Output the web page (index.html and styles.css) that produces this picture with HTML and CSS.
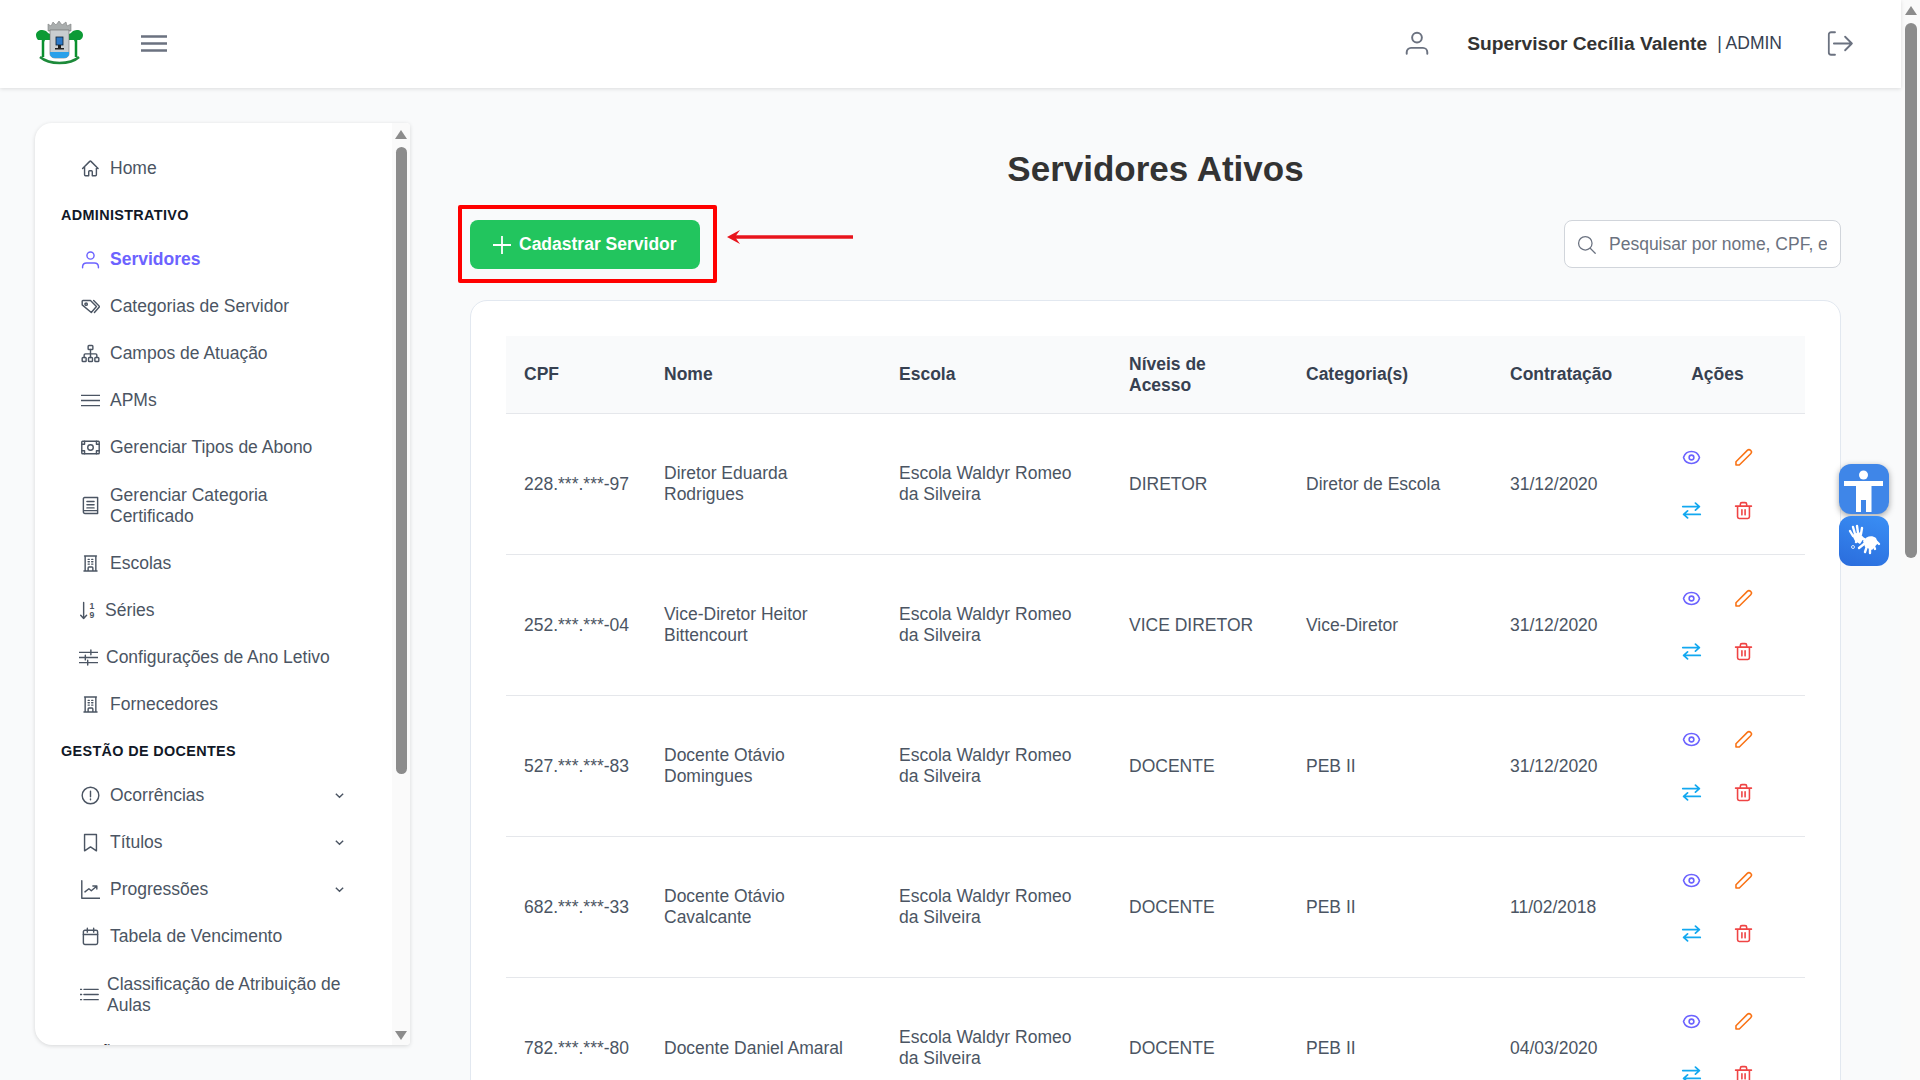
FILE: index.html
```html
<!DOCTYPE html>
<html lang="pt-BR">
<head>
<meta charset="utf-8">
<title>Servidores Ativos</title>
<link rel="stylesheet" href="styles.css">
</head>
<body>
<svg class="sprite" aria-hidden="true">
  <symbol id="i-eye" viewBox="0 0 24 24"><path d="M2 12.3a1 1 0 0 1 0-.6C3.4 7.5 7.4 4.5 12 4.5s8.6 3 10 7.2a1 1 0 0 1 0 .6c-1.4 4.2-5.4 7.2-10 7.2s-8.6-3-10-7.2z"/><circle cx="12" cy="12" r="3"/></symbol>
  <symbol id="i-pencil" viewBox="0 0 24 24"><path d="M2.5 21.5v-4.2L16.8 3a3 3 0 0 1 4.2 0l.1.1a3 3 0 0 1 0 4.2L6.7 21.5z"/></symbol>
  <symbol id="i-swap" viewBox="0 0 24 24"><path d="M2 7.5h19M16.5 3.5l4.5 4-4.5 4M22 16.5H3M7.5 12.5l-4.5 4 4.5 4"/></symbol>
  <symbol id="i-trash" viewBox="0 0 24 24"><path d="M2 6.5h20M4.5 6.5V20a2 2 0 0 0 2 2h11a2 2 0 0 0 2-2V6.5M8 6.5V4a2 2 0 0 1 2-2h4a2 2 0 0 1 2 2v2.5M10 11v6.5M14 11v6.5"/></symbol>
  <symbol id="i-building" viewBox="0 2 24 20"><path d="M3.75 21.5h16.5M4.5 2.5h15M5.25 2.5v19M18.75 2.5v19M9 6.75h1.5M9 9.75h1.5M9 12.75h1.5M13.5 6.75H15M13.5 9.75H15M13.5 12.75H15M9 21v-3.4c0-.6.5-1.1 1.1-1.1h3.8c.6 0 1.1.5 1.1 1.1V21"/></symbol>
  <symbol id="i-chevron" viewBox="0 0 24 24"><path d="M4 8l8 8 8-8"/></symbol>
</svg>

<div class="app">
  <div class="page">
    <header class="topbar">
      <div class="brand">
        <svg class="logo" viewBox="0 0 47 44" aria-label="Brasão">
          <path class="logo-trunk" d="M7 18v18M40 18v18"/>
          <path class="logo-leaf" d="M0 14c0-3 3-5 6-5 2 0 5 1 6 3l2 1v6H9l-1 2-2-2H2c-1-1-2-3-2-5zM47 14c0-3-3-5-6-5-2 0-5 1-6 3l-2 1v6h5l1 2 2-2h3c2-1 3-3 3-5z"/>
          <path class="logo-crown" d="M12 10V3l3 2 2-4 3 3 3-4 3 4 4-3 1 4 4-2v7z"/>
          <path class="logo-shield" d="M14 9h19v24c0 2-2 4-5 4h-9c-3 0-5-2-5-4z"/>
          <rect class="logo-blue" x="20" y="16" width="7" height="8"/>
          <path class="logo-dark" d="M22 24h3v3h3v1.500h-9V27h3z"/>
          <path class="logo-water" d="M14 31h19v2c0 2-2 4-5 4h-9c-3 0-5-2-5-4z"/>
          <path class="logo-ribbon" d="M4 36c6 5 12 6 19.500 6s14-1 19.500-6"/>
        </svg>
        <svg class="burger" viewBox="0 0 26 17"><path d="M0 1.500h26M0 8.500h26M0 15.500h26"/></svg>
      </div>
      <div class="account">
        <svg class="ic ic-user" viewBox="0 0 24 24"><circle cx="12" cy="7" r="4.500"/><path d="M2.500 22v-1.500a4 4 0 0 1 4-4h11a4 4 0 0 1 4 4V22"/></svg>
        <span class="name">Supervisor Cecília Valente</span>
        <span class="role">| ADMIN</span>
        <svg class="ic ic-logout" viewBox="0 0 24 24"><path d="M8 2H4.500a2 2 0 0 0-2 2v16a2 2 0 0 0 2 2H8M7 12h16M17 6l6 6-6 6"/></svg>
      </div>
    </header>

    <div class="layout">
      <aside class="sidebar">
        <nav class="side-content">
          <a class="item"><svg class="ic" viewBox="0 0 24 24"><path d="M2 12l9-9c.5-.4 1.200-.4 1.600 0l9 9M4.500 9.750V20c0 .6.500 1.100 1.100 1.100H9.750V16c0-.6.500-1.100 1.100-1.100h2.300c.6 0 1.100.500 1.100 1.100v5.100h4.100c.6 0 1.100-.500 1.100-1.100V9.750"/></svg><span>Home</span></a>
          <div class="section">ADMINISTRATIVO</div>
          <a class="item active"><svg class="ic" viewBox="0 0 24 24"><circle cx="12" cy="7" r="4.500"/><path d="M2 22.500v-1.500a5 5 0 0 1 5-4.500h10a5 5 0 0 1 5 4.500v1.500"/></svg><span>Servidores</span></a>
          <a class="item"><svg class="ic" viewBox="0 0 24 24"><path d="M1.500 5.500a1 1 0 0 1 1-1h9.500l7.500 7.500-6.500 7.500-11.500-9.500zM16 4.500l7.500 7.500-6.500 7.500"/><circle cx="6.500" cy="9" r="1.500"/></svg><span>Categorias de Servidor</span></a>
          <a class="item"><svg class="ic" viewBox="0 0 24 24"><rect x="9" y="2" width="6" height="5" rx="1"/><rect x="1.500" y="17" width="5" height="5" rx="1"/><rect x="9.500" y="17" width="5" height="5" rx="1"/><rect x="17.500" y="17" width="5" height="5" rx="1"/><path d="M12 7v10M4 17v-3a1.500 1.500 0 0 1 1.500-1.500h13A1.500 1.500 0 0 1 20 14v3"/></svg><span>Campos de Atuação</span></a>
          <a class="item"><svg class="ic" viewBox="0 0 24 24"><path d="M0.500 5.500h23M0.500 12h23M0.500 18.500h23"/></svg><span>APMs</span></a>
          <a class="item"><svg class="ic" viewBox="0 0 24 24"><rect x="1" y="4" width="22" height="16" rx="1"/><circle cx="12" cy="12" r="3.500"/><path d="M1 8h3.500V4M19.500 4v4H23M1 16h3.500v4M19.500 20v-4H23"/></svg><span>Gerenciar Tipos de Abono</span></a>
          <a class="item two"><svg class="ic" viewBox="0 0 24 24"><path d="M3 20V3.500A1.500 1.500 0 0 1 4.500 2H21v20H5a2 2 0 0 1-2-2zM3 18.500h18M7.500 7h9M7.500 11h9M7.500 15h9"/></svg><span>Gerenciar Categoria Certificado</span></a>
          <a class="item"><svg class="ic"><use href="#i-building"/></svg><span>Escolas</span></a>
          <a class="item item-narrow"><svg class="ic ic-sort" viewBox="0 0 20 24"><path d="M4.500 2v20M.8 18l3.700 4 3.700-4"/><text class="sort-num" x="12" y="10">1</text><text class="sort-num" x="12" y="22">9</text></svg><span>Séries</span></a>
          <a class="item item-wide"><svg class="ic" viewBox="0 0 24 24"><path d="M0.500 5.500h23M0.500 12h23M0.500 18.500h23M15 2.500v6M8 9v6M11 15.500v6"/></svg><span>Configurações de Ano Letivo</span></a>
          <a class="item"><svg class="ic"><use href="#i-building"/></svg><span>Fornecedores</span></a>
          <div class="section">GESTÃO DE DOCENTES</div>
          <a class="item"><svg class="ic" viewBox="0 0 24 24"><circle cx="12" cy="12" r="10.500"/><path d="M12 6.500v7M12 16.500v1"/></svg><span>Ocorrências</span><svg class="chev"><use href="#i-chevron"/></svg></a>
          <a class="item"><svg class="ic" viewBox="0 0 24 24"><path d="M19.500 2H4.500v20.500l7.500-5 7.500 5z"/></svg><span>Títulos</span><svg class="chev"><use href="#i-chevron"/></svg></a>
          <a class="item"><svg class="ic" viewBox="0 0 24 24"><path d="M1 1v22h23M5 15l5-4 3 2.500 6-5M15 7.500h5v4"/></svg><span>Progressões</span><svg class="chev"><use href="#i-chevron"/></svg></a>
          <a class="item"><svg class="ic" viewBox="0 0 24 24"><rect x="3" y="4" width="18" height="18" rx="2"/><path d="M3 9.500h18M8 1.500v5M16 1.500v5"/></svg><span>Tabela de Vencimento</span></a>
          <a class="item two item-list"><svg class="ic" viewBox="0 0 24 24"><path d="M5 5.500h18M5 12h18M5 18.500h18M0.500 5.500h1.500M0.500 12h1.500M0.500 18.500h1.500"/></svg><span>Classificação de Atribuição de Aulas</span></a>
          <div class="section">GESTÃO</div>
        </nav>
        <div class="side-scroll">
          <i class="tri tri-up"></i>
          <i class="thumb side-thumb"></i>
          <i class="tri tri-down"></i>
        </div>
      </aside>

      <main class="main">
        <h1 class="title">Servidores Ativos</h1>
        <div class="toolbar">
          <button class="add-btn"><svg class="plus" viewBox="0 0 18 18"><path d="M9 0v18M0 9h18"/></svg>Cadastrar Servidor</button>
          <div class="mark"></div>
          <svg class="mark-arrow" viewBox="0 0 126 16"><path class="arrow-line" d="M6 8h120"/><path class="arrow-head" d="M0 8l13-7-5 7 5 7z"/></svg>
          <label class="search">
            <svg class="ic ic-search" viewBox="0 0 24 24"><circle cx="10.500" cy="10.500" r="8.500"/><path d="M17 17l6 6"/></svg>
            <input class="search-input" placeholder="Pesquisar por nome, CPF, e-mail...">
          </label>
        </div>

        <section class="card">
          <table class="table">
            <colgroup>
              <col class="c1"><col class="c2"><col class="c3"><col class="c4"><col class="c5"><col class="c6"><col class="c7">
            </colgroup>
            <thead>
              <tr><th>CPF</th><th>Nome</th><th>Escola</th><th class="th-wrap">Níveis de Acesso</th><th>Categoria(s)</th><th>Contratação</th><th class="center">Ações</th></tr>
            </thead>
            <tbody>
              <tr><td>228.***.***-97</td><td>Diretor Eduarda Rodrigues</td><td>Escola Waldyr Romeo da Silveira</td><td>DIRETOR</td><td>Diretor de Escola</td><td>31/12/2020</td><td><div class="actions"><svg class="act eye"><use href="#i-eye"/></svg><svg class="act pen"><use href="#i-pencil"/></svg><svg class="act swap"><use href="#i-swap"/></svg><svg class="act trash"><use href="#i-trash"/></svg></div></td></tr>
              <tr><td>252.***.***-04</td><td>Vice-Diretor Heitor Bittencourt</td><td>Escola Waldyr Romeo da Silveira</td><td>VICE DIRETOR</td><td>Vice-Diretor</td><td>31/12/2020</td><td><div class="actions"><svg class="act eye"><use href="#i-eye"/></svg><svg class="act pen"><use href="#i-pencil"/></svg><svg class="act swap"><use href="#i-swap"/></svg><svg class="act trash"><use href="#i-trash"/></svg></div></td></tr>
              <tr><td>527.***.***-83</td><td>Docente Otávio Domingues</td><td>Escola Waldyr Romeo da Silveira</td><td>DOCENTE</td><td>PEB II</td><td>31/12/2020</td><td><div class="actions"><svg class="act eye"><use href="#i-eye"/></svg><svg class="act pen"><use href="#i-pencil"/></svg><svg class="act swap"><use href="#i-swap"/></svg><svg class="act trash"><use href="#i-trash"/></svg></div></td></tr>
              <tr><td>682.***.***-33</td><td>Docente Otávio Cavalcante</td><td>Escola Waldyr Romeo da Silveira</td><td>DOCENTE</td><td>PEB II</td><td>11/02/2018</td><td><div class="actions"><svg class="act eye"><use href="#i-eye"/></svg><svg class="act pen"><use href="#i-pencil"/></svg><svg class="act swap"><use href="#i-swap"/></svg><svg class="act trash"><use href="#i-trash"/></svg></div></td></tr>
              <tr><td>782.***.***-80</td><td>Docente Daniel Amaral</td><td>Escola Waldyr Romeo da Silveira</td><td>DOCENTE</td><td>PEB II</td><td>04/03/2020</td><td><div class="actions"><svg class="act eye"><use href="#i-eye"/></svg><svg class="act pen"><use href="#i-pencil"/></svg><svg class="act swap"><use href="#i-swap"/></svg><svg class="act trash"><use href="#i-trash"/></svg></div></td></tr>
            </tbody>
          </table>
        </section>
      </main>
    </div>

    <div class="a11y">
      <div class="a11y-btn a11y-body">
        <svg viewBox="0 0 50 50"><circle cx="24.500" cy="11" r="4.500"/><path d="M5 17h39v5H32.500v26H27V36h-5v12h-5V22H5z"/></svg>
      </div>
      <div class="a11y-btn a11y-hands">
        <svg viewBox="0 0 50 50">
          <path class="hand-fill" d="M13 19l7-3 5 6-4 6-5-3zM24 25c3-5 9-6 13-3l2 5-6 7-7-3z"/>
          <path class="hand-line" d="M14 20l-3-5M16 18l-2-7M19 17l-1-7M22 18l1-6M25 23l-5-1-3 4M34 28l2 5M31 30l0 7M28 30l-2 6M25 28l-5 4M37 25l3 3"/>
          <circle class="hand-dot" cx="14" cy="31" r="1.500"/>
        </svg>
      </div>
    </div>
  </div>

  <div class="page-scroll">
    <i class="tri tri-up"></i>
    <i class="thumb page-thumb"></i>
    <i class="tri tri-down"></i>
  </div>
</div>
</body>
</html>
```

FILE: styles.css
```css
* { box-sizing: border-box; }
html, body { margin: 0; height: 100%; overflow: hidden; }
body {
  font-family: "Liberation Sans", Arial, sans-serif;
  font-size: 17.500px;
  line-height: 21px;
  color: #4b5563;
  background: #f9fafb;
}
.sprite { display: none; }

.app { display: flex; height: 1080px; overflow: hidden; }
.page { position: relative; flex: 1; min-width: 0; display: flex; flex-direction: column; }

/* native-looking scrollbars */
.page-scroll, .side-scroll {
  flex: none;
  display: flex;
  flex-direction: column;
  align-items: center;
  background: #fafafa;
}
.page-scroll { width: 19px; padding: 6px 1px 0 2px; }
.side-scroll { width: 18px; padding-top: 7px; }
.thumb { display: block; width: 11px; background: #8c8c8c; border-radius: 6px; }
.page-thumb { width: 12px; height: 535px; margin-top: 8px; }
.side-thumb { height: 627px; margin-top: 8px; }
.tri { display: block; width: 0; height: 0; border-left: 6.5px solid transparent; border-right: 6.5px solid transparent; }
.tri-up { border-bottom: 9px solid #8c8c8c; }
.tri-down { border-top: 9px solid #8c8c8c; margin-top: auto; margin-bottom: 5px; }
.page-scroll .tri-down { display: none; }

/* top bar */
.topbar {
  flex: none;
  height: 88px;
  display: flex;
  align-items: center;
  justify-content: space-between;
  padding: 0 48px 2px 36px;
  background: #fff;
  box-shadow: 0 1px 4px rgba(0, 0, 0, .12);
  position: relative;
  z-index: 2;
}
.brand { display: flex; align-items: center; gap: 58px; }
.logo { width: 47px; height: 44px; display: block; }
.logo-trunk { fill: none; stroke: #0a8f2e; stroke-width: 2.500; }
.logo-leaf { fill: #0c9a35; }
.logo-crown { fill: #a9adad; stroke: #7d8080; stroke-width: .6; }
.logo-shield { fill: #c9cdd0; stroke: #666; stroke-width: .6; }
.logo-blue { fill: #2a78c8; stroke: #123; stroke-width: .8; }
.logo-dark { fill: #222; }
.logo-water { fill: #2aa0ea; }
.logo-ribbon { fill: none; stroke: #1d8a3a; stroke-width: 2.500; }
.burger { width: 26px; height: 17px; display: block; fill: none; stroke: #6b7280; stroke-width: 2.400; }
.account { display: flex; align-items: center; }
.ic { width: 19px; height: 19px; flex: none; fill: none; stroke: currentColor; stroke-width: 1.800; stroke-linecap: round; stroke-linejoin: round; }
.ic-user { width: 26px; height: 26px; color: #6b7280; margin-right: 37px; }
.name { font-size: 19.200px; font-weight: 700; color: #333; }
.role { color: #374151; margin-left: 10px; }
.ic-logout { width: 27px; height: 27px; color: #6b7280; margin-left: 44px; stroke-width: 1.600; }

/* body */
.layout { flex: 1; min-height: 0; display: flex; align-items: flex-start; padding-left: 35px; overflow: hidden; }

.sidebar {
  flex: none;
  width: 375px;
  height: 922px;
  margin-top: 35px;
  display: flex;
  background: #fff;
  border-radius: 17px 4px 4px 17px;
  box-shadow: 0 1px 4px rgba(0, 0, 0, .14);
  overflow: hidden;
}
.side-content { flex: 1; min-width: 0; padding: 22px 28px 0 26px; overflow: hidden; }
.section { padding: 13.500px 0 12.500px; font-size: 14.400px; line-height: 18px; font-weight: 700; color: #111827; letter-spacing: .35px; }
.item { display: flex; align-items: center; gap: 10px; padding: 13px 19px 13px 20px; color: #4b5563; }
.item span { flex: 1; min-width: 0; }
.two { padding-top: 13.500px; padding-bottom: 13.500px; }
.active { color: #6c63ff; font-weight: 700; }
.item-narrow { padding-left: 19px; gap: 9px; }
.ic-sort { width: 16px; }
.sort-num { font-size: 11px; font-weight: 700; fill: currentColor; stroke: none; }
.item-wide { padding-left: 18px; gap: 8px; }
.item-list { padding-left: 19px; gap: 8px; }
.chev { width: 11px; height: 11px; flex: none; fill: none; stroke: #4b5563; stroke-width: 3; }

/* main */
.main { flex: 1; min-width: 0; padding: 61px 60px 0 60px; }
.title { margin: 0 0 31px; font-size: 35px; line-height: 40px; font-weight: 700; text-align: center; color: #333; }
.toolbar { position: relative; display: flex; justify-content: space-between; align-items: flex-start; height: 49px; margin-bottom: 31px; }
.add-btn {
  display: flex;
  align-items: center;
  gap: 8px;
  height: 49px;
  width: 230px;
  padding: 0 0 0 23px;
  border: 0;
  border-radius: 8px;
  background: #22c55e;
  color: #fff;
  font: 700 17.500px/21px "Liberation Sans", Arial, sans-serif;
}
.plus { width: 18px; height: 18px; fill: none; stroke: #fff; stroke-width: 1.800; }
.mark { position: absolute; left: -12px; top: -15px; width: 259px; height: 78px; border: 4px solid #f00; border-radius: 2px; pointer-events: none; }
.mark-arrow { position: absolute; left: 257px; top: 9px; width: 126px; height: 16px; }
.arrow-line { stroke: #e8141c; stroke-width: 3.500; fill: none; }
.arrow-head { fill: #e8141c; }
.search {
  display: flex;
  align-items: center;
  width: 277px;
  height: 48px;
  padding: 0 13px 0 12px;
  gap: 13px;
  background: #fff;
  border: 1px solid #d1d5db;
  border-radius: 8px;
}
.ic-search { color: #6b7280; stroke-width: 1.600; }
.search-input { flex: 1; min-width: 0; border: 0; outline: 0; padding: 0; background: transparent; font: 17.500px/21px "Liberation Sans", Arial, sans-serif; color: #374151; }
.search-input::placeholder { color: #6b7280; opacity: 1; }

.card { padding: 35px; background: #fff; border: 1px solid #e2e8f0; border-radius: 17px; }
.table { width: 1299px; table-layout: fixed; border-collapse: collapse; }
.c1 { width: 140px; } .c2 { width: 235px; } .c3 { width: 230px; } .c4 { width: 177px; }
.c5 { width: 204px; } .c6 { width: 138px; } .c7 { width: 175px; }
.table th { height: 77px; padding: 0 18px; background: #f9fafb; text-align: left; font-weight: 700; color: #374151; border-bottom: 1px solid #e5e7eb; }
.table th.center { text-align: center; }
.table th.th-wrap { padding-top: 1px; }
.table td { height: 141px; padding: 1px 18px 0; border-bottom: 1px solid #e5e7eb; }
.actions { display: grid; grid-template-columns: 52px 52px; grid-auto-rows: 53px; justify-content: center; justify-items: center; align-items: center; margin-top: -1px; }
.act { width: 19px; height: 19px; fill: none; stroke-width: 2; stroke-linecap: round; stroke-linejoin: round; }
.eye { stroke: #6c63ff; }
.pen { stroke: #f97316; }
.swap { stroke: #12a8f0; width: 21px; height: 21px; }
.trash { stroke: #ef4444; }

/* accessibility widgets */
.a11y { position: absolute; left: 1839px; top: 464px; display: flex; flex-direction: column; gap: 2px; z-index: 3; }
.a11y-btn { width: 50px; height: 50px; border-radius: 12px; }
.a11y-btn svg { display: block; width: 50px; height: 50px; }
.a11y-body { background: #3f86e8; box-shadow: 0 2px 6px rgba(0, 0, 0, .35); fill: #fff; }
.a11y-hands { background: linear-gradient(200deg, #3a8ff5, #2a6cdc); }
.hand-fill { fill: #fff; }
.hand-line { fill: none; stroke: #fff; stroke-width: 2.400; stroke-linecap: round; }
.hand-dot { fill: none; stroke: #fff; stroke-width: .8; }
```
